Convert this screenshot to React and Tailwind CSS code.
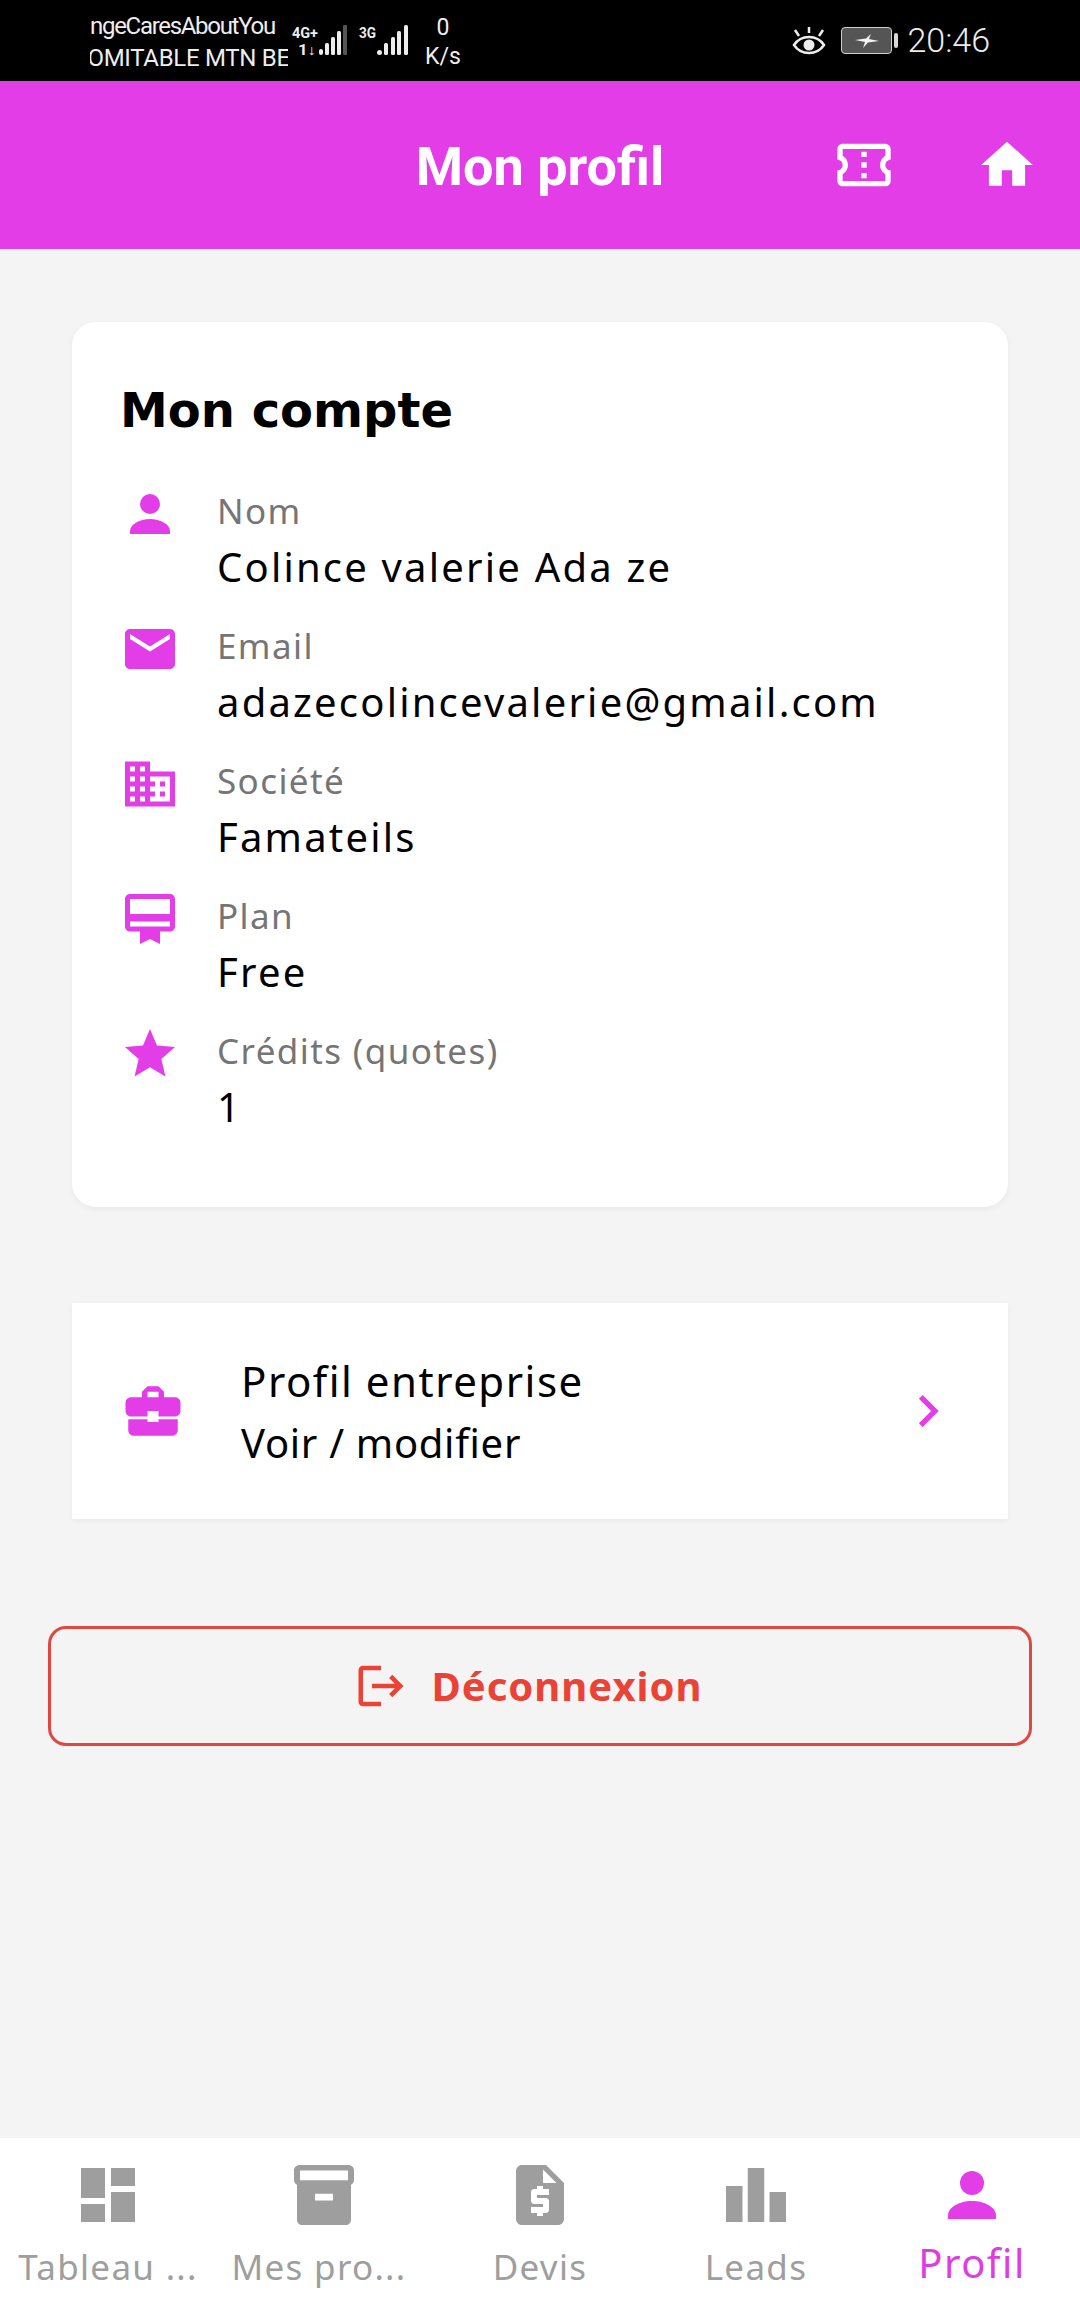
import {
  MdBusiness, MdBusinessCenter, MdCardMembership, MdChevronRight, MdDashboard, MdEmail, MdHome,
  MdLeaderboard, MdLogout, MdOutlineConfirmationNumber, MdRequestQuote, MdStar,
} from "react-icons/md";

const PersonIcon = ({ size, className }) => (
  <svg width={size} height={size} viewBox="0 0 24 24" fill="currentColor" className={className}>
    <circle cx="12" cy="8" r="4" />
    <path d="M4 20v-1.2C4 16 8 14 12 14s8 2 8 4.800V20z" />
  </svg>
);

const ArchiveIcon = ({ size, className }) => (
  <svg width={size} height={size} viewBox="0 0 24 24" fill="currentColor" className={className}>
    <path fillRule="evenodd" d="M3.800 2h16.400c.9 0 1.800.8 1.800 1.700v3.200c0 .8-.4 1.400-1 1.700V20.300c0 .9-.8 1.700-1.700 1.700H4.700c-.9 0-1.700-.8-1.700-1.700V8.600c-.6-.3-1-.9-1-1.700V3.700C2 2.800 2.900 2 3.800 2zM4 3.800V7.100h16V3.800zM9 11.600v2.200h6v-2.200z" />
  </svg>
);

const SignalOne = () => (
  <svg width="56" height="32" viewBox="0 0 56 32" className="text-[#ededed]" fill="currentColor">
    <text x="0" y="13" fontFamily="Roboto" fontWeight="700" fontSize="15" textLength="26" lengthAdjust="spacingAndGlyphs">4G+</text>
    <text x="6" y="30" fontFamily="Roboto" fontWeight="700" fontSize="14" textLength="18" lengthAdjust="spacingAndGlyphs">1↓</text>
    <rect x="27" y="24" width="4" height="6" rx="2" />
    <rect x="33" y="18" width="4" height="12" rx="1.500" />
    <rect x="39" y="12" width="4" height="18" rx="1.500" />
    <rect x="45" y="6" width="4" height="24" rx="1.500" />
    <rect x="51" y="0" width="4" height="30" rx="1" fill="#555" />
  </svg>
);

const SignalTwo = () => (
  <svg width="50" height="32" viewBox="0 0 50 32" className="text-[#ededed]" fill="currentColor">
    <text x="0" y="13" fontFamily="Roboto" fontWeight="700" fontSize="15" textLength="17" lengthAdjust="spacingAndGlyphs">3G</text>
    <rect x="18" y="25" width="5" height="5" rx="2.500" />
    <rect x="25" y="18" width="4" height="12" rx="1.500" />
    <rect x="32" y="12" width="4" height="18" rx="1.500" />
    <rect x="38" y="6" width="4" height="24" rx="1.500" />
    <rect x="45" y="0" width="4" height="30" rx="1.500" />
  </svg>
);

const EyeIcon = () => (
  <svg width="34" height="30" viewBox="0 0 34 30" fill="none" stroke="#ededed" strokeWidth="2.500">
    <path d="M2 19c4-6 9-8 15-8s11 2 15 8c-4 6-9 8-15 8s-11-2-15-8z" />
    <circle cx="17" cy="19" r="5.500" fill="#ededed" stroke="none" />
    <path d="M17 1v6M3 4l4 6M31 4l-4 6" />
  </svg>
);

const BatteryIcon = () => (
  <div className="flex items-center gap-[2px]">
    <div className="flex h-[27px] w-[51px] items-center justify-center rounded-[4px] border border-[#cfcfcf] bg-[#555]">
      <svg width="26" height="14" viewBox="0 0 24 14" fill="#f2f2f2">
        <path d="M0 6l11-1.500 5-4.500-2 5 10 2-11 1.500-5 5.500 2-6z" />
      </svg>
    </div>
    <div className="h-[15px] w-[4px] rounded-[2px] bg-[#d8d8d8]"></div>
  </div>
);

const accounts = [
  { Icon: PersonIcon, label: "Nom", value: "Colince valerie Ada ze" },
  { Icon: MdEmail, label: "Email", value: "adazecolincevalerie@gmail.com" },
  { Icon: MdBusiness, label: "Société", value: "Famateils" },
  { Icon: MdCardMembership, label: "Plan", value: "Free" },
  { Icon: MdStar, label: "Crédits (quotes)", value: "1" },
];

const tabs = [
  { Icon: MdDashboard, label: "Tableau ..." },
  { Icon: ArchiveIcon, label: "Mes pro...", shift: "mr-[10px]" },
  { Icon: MdRequestQuote, label: "Devis" },
  { Icon: MdLeaderboard, label: "Leads" },
  { Icon: PersonIcon, label: "Profil", active: true },
];

const StatusBar = () => (
  <div className="flex h-[81px] shrink-0 items-center bg-black pl-[90px] pr-[90px] font-['Roboto',sans-serif] text-[#ededed]">
    <div className="w-[198px] overflow-hidden whitespace-nowrap pt-[2px] text-[24px] leading-[32px]">
      <div className="tracking-[-1.3px]">ngeCaresAboutYou</div>
      <div className="ml-[-18px] tracking-[-0.3px]">DOMITABLE MTN BEST</div>
    </div>
    <div className="ml-[4px]"><SignalOne /></div>
    <div className="ml-[11px]"><SignalTwo /></div>
    <div className="ml-[16px] w-[36px] pt-[2px] text-center text-[23px] leading-[29px]">
      <div>0</div>
      <div>K/s</div>
    </div>
    <div className="ml-auto flex items-center">
      <EyeIcon />
      <div className="ml-[15px]"><BatteryIcon /></div>
      <div className="ml-[9px] text-[34px] font-light">20:46</div>
    </div>
  </div>
);

const Header = () => (
  <div className="grid h-[168px] shrink-0 grid-cols-[1fr_auto_1fr] items-center bg-[#e33de8] text-white">
    <div></div>
    <h1 className="pt-[2px] font-['Roboto',sans-serif] text-[54px] font-bold">Mon profil</h1>
    <div className="flex items-center justify-end gap-[80px] pr-[42px]">
      <MdOutlineConfirmationNumber size={64} />
      <MdHome size={62} />
    </div>
  </div>
);

const App = () => {
  return (
    <div className="flex h-[2312px] w-[1080px] flex-col overflow-hidden bg-[#f4f4f5] font-['Noto_Sans',sans-serif]">
      <StatusBar />
      <Header />

      <main className="flex-1 px-[72px] pt-[73px]">
        <section className="h-[885px] rounded-[24px] bg-white px-[48px] pt-[58px] shadow-[0_2px_6px_rgba(0,0,0,0.05)]">
          <h2 className="font-['DejaVu_Sans',sans-serif] text-[48px] font-bold leading-[60px] text-black">Mon compte</h2>
          <div className="mt-[44px] flex flex-col">
            {accounts.map(({ Icon, label, value }) => (
              <div key={label} className="flex h-[135px] items-start">
                <Icon size={60} className="text-[#e33de8]" />
                <div className="ml-[37px] pt-[2px]">
                  <div className="text-[35px] leading-[50px] tracking-[1.4px] text-[#757575]">{label}</div>
                  <div className="mt-[5px] text-[40px] leading-[52px] tracking-[2.2px] text-black">{value}</div>
                </div>
              </div>
            ))}
          </div>
        </section>

        <section className="mt-[96px] flex h-[216px] items-center bg-white pl-[48px] pr-[48px] shadow-[0_2px_6px_rgba(0,0,0,0.04)]">
          <MdBusinessCenter size={66} className="text-[#e33de8]" />
          <div className="ml-[55px] flex-1 pt-[2px] text-black">
            <div className="text-[42px] leading-[62px] tracking-[1.5px]">Profil entreprise</div>
            <div className="text-[40px] leading-[62px] tracking-[0.7px]">Voir / modifier</div>
          </div>
          <MdChevronRight size={64} className="text-[#e33de8]" />
        </section>

        <button className="mx-[-24px] mt-[107px] flex h-[120px] w-[984px] items-center justify-center rounded-[18px] border-[3px] border-[#e0483f] pr-[24px] text-[#ea4335]">
          <MdLogout size={54} />
          <span className="ml-[24px] text-[40px] font-bold tracking-[1px]">Déconnexion</span>
        </button>
      </main>

      <nav className="grid h-[174px] shrink-0 grid-cols-5 bg-white">
        {tabs.map(({ Icon, label, active, shift }) => (
          <div key={label} className="flex flex-col items-center pt-[21px]">
            <Icon size={72} className={active ? "text-[#e33de8]" : "text-[#9e9e9e]"} />
            {active ? (
              <span className="mt-[4px] text-[40px] leading-[56px] tracking-[1.5px] text-[#dc3fe0]">{label}</span>
            ) : (
              <span className={`mt-[10px] whitespace-nowrap text-[35px] leading-[52px] tracking-[1.3px] text-[#9e9e9e] ${shift || ""}`}>{label}</span>
            )}
          </div>
        ))}
      </nav>
    </div>
  );
};

export default App;
